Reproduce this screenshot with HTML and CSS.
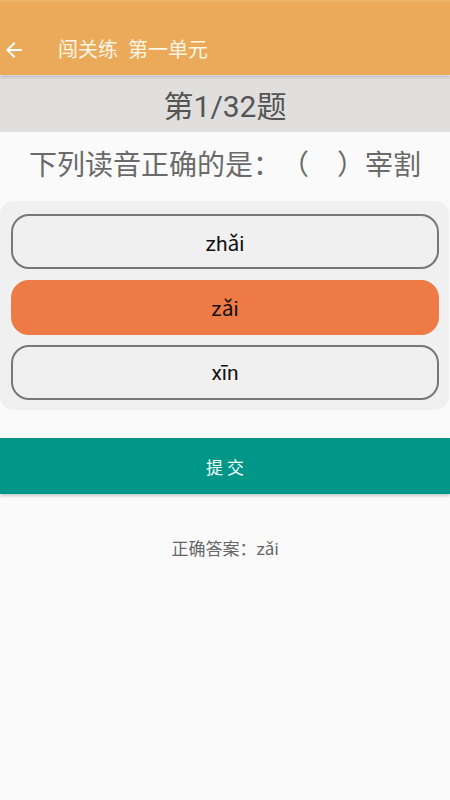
FILE: index.html
```html
<!DOCTYPE html>
<html lang="zh">
<head>
<meta charset="utf-8">
<link rel="stylesheet" href="styles.css">
</head>
<body>
<div class="app">
  <header class="topbar">
    <svg class="back" width="24" height="24" viewBox="0 0 24 24"><path d="M20 11H7.83l5.59-5.59L12 4l-8 8 8 8 1.41-1.41L7.83 13H20v-2z" fill="#fff"/></svg>
    <span class="title">闯关练&nbsp;&nbsp;第一单元</span>
  </header>
  <div class="counter">第1/32题</div>
  <div class="question">下列读音正确的是：（　）宰割</div>
  <div class="options">
    <div class="opt">zhǎi</div>
    <div class="opt selected">zǎi</div>
    <div class="opt">xīn</div>
  </div>
  <div class="submit">提 交</div>
  <div class="answer">正确答案：zǎi</div>
</div>
</body>
</html>
```
FILE: styles.css
```css
html, body { margin: 0; padding: 0; }
body { background: #FAFAFA; font-family: Roboto, "Noto Sans CJK SC", sans-serif; text-spacing-trim: space-all; }
.app { width: 450px; min-height: 800px; display: flex; flex-direction: column; }
.topbar {
  height: 75px; background: #EAAA5A; display: flex; align-items: flex-end;
  padding: 0 0 13px 2px; box-sizing: border-box;
  box-shadow: 0 2px 3px rgba(0,0,0,0.18); position: relative; z-index: 1;
  border-top: 2px solid #EFB467;
}
.title { color: #FFF6E6; font-size: 20px; margin-left: 32px; line-height: 24px; }
.counter {
  height: 56px; background: #E0DFDE; color: #555; font-size: 30px;
  display: flex; align-items: center; justify-content: center; margin-top: 1px;
}
.question {
  color: #6a6a6a; font-size: 28px; text-align: center; height: 69px; line-height: 68px;
  white-space: nowrap;
}
.options {
  background: #F0F0F0; border-radius: 14px; margin: 0 1px 0 0; padding: 13px 10px 10px 11px;
  display: flex; flex-direction: column; gap: 10.5px;
}
.opt {
  height: 55px; box-sizing: border-box; border: 2px solid #777; border-radius: 18px;
  display: flex; align-items: center; justify-content: center; font-size: 21px; color: #111;
}
.opt.selected { background: #EE7A45; border-color: #EE7A45; }
.submit {
  margin-top: 28px; height: 56px; background: #009688; color: #F4FFFD; font-size: 17px;
  display: flex; align-items: center; justify-content: center;
  box-shadow: 0 2px 3px rgba(0,0,0,0.2);
}
.answer { margin-top: 41px; text-align: center; color: #666; font-size: 17px; }
```
